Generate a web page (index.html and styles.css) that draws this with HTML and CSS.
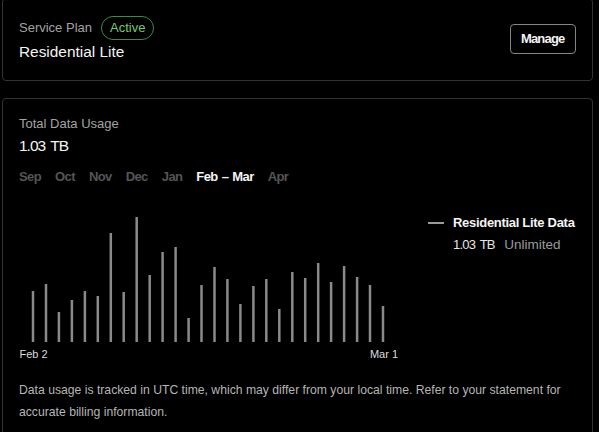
FILE: index.html
```html
<!DOCTYPE html>
<html lang="en">
<head>
    <meta charset="UTF-8">
    <meta name="viewport" content="width=device-width, initial-scale=1.0">
    <title>Service Plan</title>
    <link rel="stylesheet" href="styles.css">
</head>
<body>

    <section class="card plan">
        <div class="plan-info">
            <div class="plan-head">
                <span class="label">Service Plan</span>
                <span class="badge">Active</span>
            </div>
            <div class="plan-name">Residential Lite</div>
        </div>
        <button class="btn">Manage</button>
    </section>

    <section class="card usage">
        <div class="label">Total Data Usage</div>
        <div class="usage-total">1.03 TB</div>

        <div class="months">
            <span>Sep</span>
            <span>Oct</span>
            <span>Nov</span>
            <span>Dec</span>
            <span>Jan</span>
            <span class="active">Feb &ndash; Mar</span>
            <span>Apr</span>
        </div>

        <div class="chart-row">
            <!-- daily usage, Feb 2 .. Mar 1, baseline at y=142 -->
            <svg class="chart" width="392" height="165" viewBox="0 0 392 165">
                <g class="bars">
                    <line x1="14.0" y1="142" x2="14.0" y2="91"/>
                    <line x1="27.0" y1="142" x2="27.0" y2="84"/>
                    <line x1="39.9" y1="142" x2="39.9" y2="112"/>
                    <line x1="52.9" y1="142" x2="52.9" y2="100"/>
                    <line x1="65.9" y1="142" x2="65.9" y2="91"/>
                    <line x1="78.8" y1="142" x2="78.8" y2="96"/>
                    <line x1="91.8" y1="142" x2="91.8" y2="33"/>
                    <line x1="104.7" y1="142" x2="104.7" y2="92"/>
                    <line x1="117.7" y1="142" x2="117.7" y2="17"/>
                    <line x1="130.7" y1="142" x2="130.7" y2="75"/>
                    <line x1="143.6" y1="142" x2="143.6" y2="52"/>
                    <line x1="156.6" y1="142" x2="156.6" y2="47"/>
                    <line x1="169.6" y1="142" x2="169.6" y2="118"/>
                    <line x1="182.5" y1="142" x2="182.5" y2="85"/>
                    <line x1="195.5" y1="142" x2="195.5" y2="67"/>
                    <line x1="208.4" y1="142" x2="208.4" y2="79"/>
                    <line x1="221.4" y1="142" x2="221.4" y2="104"/>
                    <line x1="234.4" y1="142" x2="234.4" y2="86"/>
                    <line x1="247.3" y1="142" x2="247.3" y2="79"/>
                    <line x1="260.3" y1="142" x2="260.3" y2="109"/>
                    <line x1="273.3" y1="142" x2="273.3" y2="72"/>
                    <line x1="286.2" y1="142" x2="286.2" y2="78"/>
                    <line x1="299.2" y1="142" x2="299.2" y2="63"/>
                    <line x1="312.1" y1="142" x2="312.1" y2="82"/>
                    <line x1="325.1" y1="142" x2="325.1" y2="66"/>
                    <line x1="338.1" y1="142" x2="338.1" y2="77"/>
                    <line x1="351.0" y1="142" x2="351.0" y2="85"/>
                    <line x1="364.0" y1="142" x2="364.0" y2="106"/>
                </g>
                <text class="axis" x="14.5" y="158">Feb 2</text>
                <text class="axis" x="365" y="158">Mar 1</text>
            </svg>

            <div class="legend">
                <div class="legend-title"><span class="swatch"></span>Residential Lite Data</div>
                <div class="legend-values">
                    <span class="legend-amount">1.03 TB</span>
                    <span class="legend-limit">Unlimited</span>
                </div>
            </div>
        </div>

        <p class="note">Data usage is tracked in UTC time, which may differ from your local time. Refer to your statement for accurate billing information.</p>
    </section>

</body>
</html>
```

FILE: styles.css
```css
body {
    margin: 0;
    padding: 0 6px 0 2px;
    background-color: #000;
    color: #f2f2f2;
    font-family: "Liberation Sans", Arial, sans-serif;
}

.card {
    border: 1px solid #333;
    border-radius: 4px;
    padding: 0 16px;
}

/* Plan card */
.plan {
    margin-top: -2px;
    padding-top: 17px;
    padding-bottom: 18px;
    display: flex;
    align-items: center;
    justify-content: space-between;
}

.plan-head {
    display: flex;
    align-items: center;
    gap: 9px;
    height: 24px;
}

.label {
    font-size: 13px;
    line-height: 18px;
    color: #a3a3a3;
}

.badge {
    font-size: 13px;
    line-height: 22px;
    padding: 0 8px;
    color: #76c776;
    border: 1px solid #3f8a45;
    border-radius: 12px;
}

.plan-name {
    margin-top: 2px;
    font-size: 15.4px;
    line-height: 20px;
    color: #f4f4f4;
}

.btn {
    font-family: "Liberation Sans", Arial, sans-serif;
    font-weight: bold;
    font-size: 13px;
    letter-spacing: -0.8px;
    line-height: 28px;
    padding: 0 10.5px 0 9.5px;
    color: #f4f4f4;
    background-color: #000;
    border: 1px solid #858585;
    border-radius: 4px;
    cursor: pointer;
}

/* Usage card */
.usage {
    margin-top: 17px;
    padding-top: 16px;
    padding-bottom: 20px;
}

.usage-total {
    margin-top: 2px;
    font-size: 15.5px;
    letter-spacing: -1px;
    word-spacing: 2px;
    line-height: 22px;
    color: #f4f4f4;
}

.months {
    display: flex;
    gap: 14px;
    margin-top: 11px;
    font-weight: bold;
    font-size: 13px;
    letter-spacing: -0.6px;
    word-spacing: 1px;
    line-height: 18px;
    color: #555;
}

.months .active {
    color: #f4f4f4;
}

.chart-row {
    display: flex;
    align-items: flex-start;
    margin-top: 14px;
}

.chart {
    display: block;
    flex-shrink: 0;
}

.bars line {
    stroke: #8a8a8a;
    stroke-width: 2.5;
}

.axis {
    font-family: "Liberation Sans", Arial, sans-serif;
    font-size: 11px;
    fill: #dcdcdc;
    text-anchor: middle;
}

.legend {
    margin-left: 17px;
    margin-top: 13px;
    white-space: nowrap;
}

.legend-title {
    display: flex;
    align-items: center;
    font-weight: bold;
    font-size: 13px;
    letter-spacing: -0.3px;
    line-height: 20px;
    color: #f4f4f4;
}

.swatch {
    width: 16px;
    height: 2px;
    margin-right: 9px;
    background-color: #9a9a9a;
}

.legend-values {
    margin-top: 1px;
    padding-left: 25px;
    line-height: 20px;
}

.legend-amount {
    font-size: 13px;
    letter-spacing: -0.8px;
    word-spacing: 2px;
    color: #e6e6e6;
    margin-right: 5px;
}

.legend-limit {
    font-size: 13.5px;
    color: #9a9a9a;
}

.note {
    margin: 15px 0 0;
    font-size: 12.2px;
    line-height: 21.5px;
    color: #b5b5b5;
}
```
